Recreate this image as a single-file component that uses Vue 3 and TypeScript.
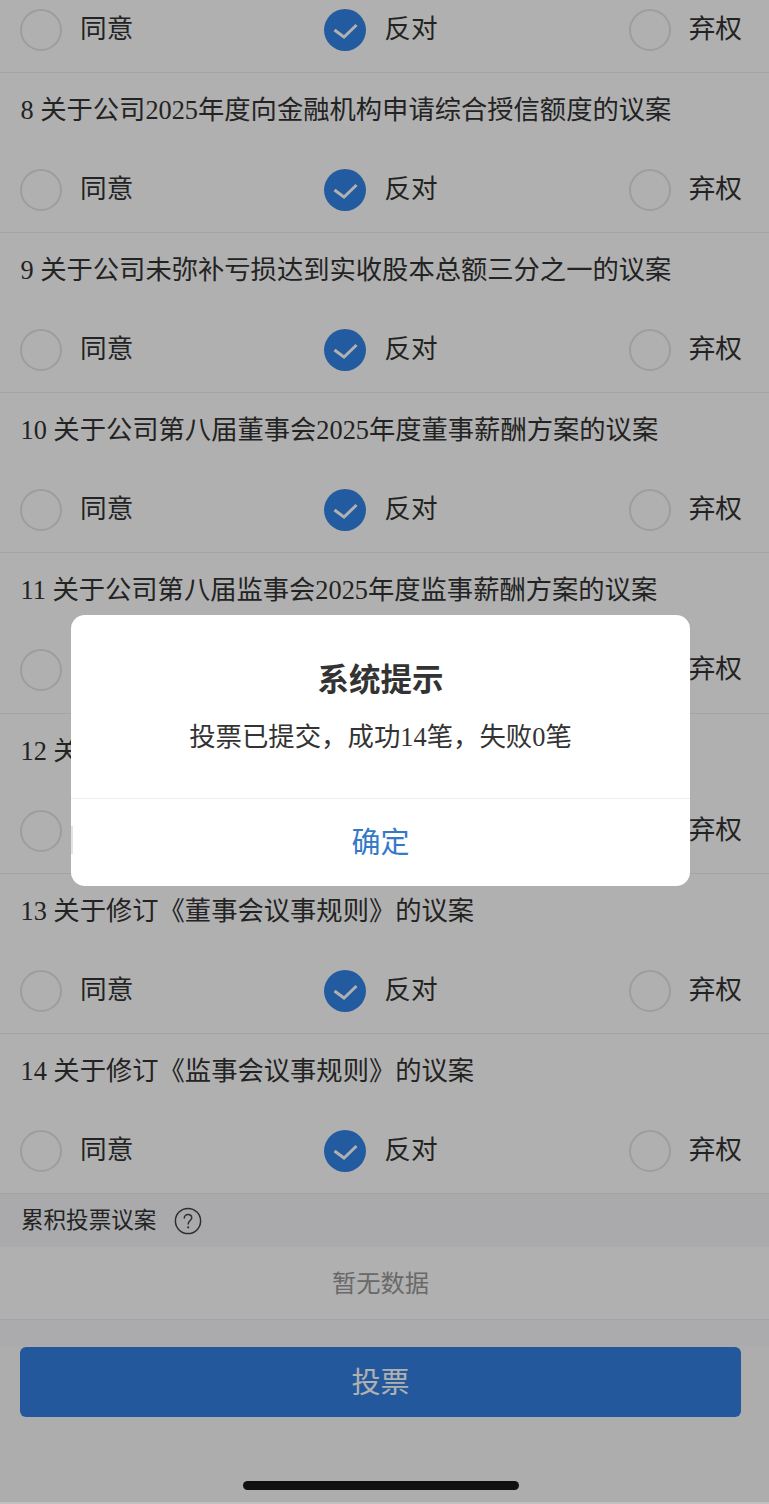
<script setup lang="ts">
const items: { no: number | null; title: string }[] = [
  { no: 7, title: '' },
  { no: 8, title: '关于公司2025年度向金融机构申请综合授信额度的议案' },
  { no: 9, title: '关于公司未弥补亏损达到实收股本总额三分之一的议案' },
  { no: 10, title: '关于公司第八届董事会2025年度董事薪酬方案的议案' },
  { no: 11, title: '关于公司第八届监事会2025年度监事薪酬方案的议案' },
  { no: 12, title: '关于修订《公司章程》的议案' },
  { no: 13, title: '关于修订《董事会议事规则》的议案' },
  { no: 14, title: '关于修订《监事会议事规则》的议案' },
]
</script>

<template>
  <div class="page">
    <section v-for="item in items" :key="item.no ?? 0" class="item" :class="{ cut: !item.title }">
      <div v-if="item.title" class="title">{{ item.no }} {{ item.title }}</div>
      <div class="options">
        <div class="option">
          <span class="radio"></span>
          <span class="label">同意</span>
        </div>
        <div class="option">
          <span class="radio on">
            <svg width="42" height="42" viewBox="0 0 42 42">
              <path d="M10.5 21 L20 28 L32.5 16" fill="none" stroke="#fff" stroke-width="3" stroke-linejoin="miter" />
            </svg>
          </span>
          <span class="label">反对</span>
        </div>
        <div class="option">
          <span class="radio"></span>
          <span class="label">弃权</span>
        </div>
      </div>
    </section>

    <div class="section-head">
      <span class="section-name">累积投票议案</span>
      <svg width="28" height="28" viewBox="0 0 28 28" class="help">
        <circle cx="14" cy="14" r="12.6" fill="none" stroke="#444" stroke-width="1.5" />
        <path d="M10.3 11 C10.3 8.8 12 7.6 14 7.6 C16.2 7.6 17.7 9 17.7 10.9 C17.7 13.4 14.2 13.8 14.2 16.9" fill="none" stroke="#444" stroke-width="1.5" stroke-linecap="round" />
        <circle cx="14.2" cy="20.3" r="1.1" fill="#444" />
      </svg>
    </div>
    <div class="empty">暂无数据</div>
    <div class="footer">
      <button class="vote" type="button">投票</button>
    </div>
    <div class="home-area"></div>

    <div class="mask"></div>
    <div class="home-bar"></div>
    <div class="edge"></div>
    <div class="dialog">
      <div class="dialog-body">
        <div class="dialog-title">系统提示</div>
        <div class="dialog-text">投票已提交，成功14笔，失败0笔</div>
      </div>
      <div class="dialog-action">确定</div>
      <span class="dialog-mark"></span>
    </div>
  </div>
</template>

<style>
html, body { margin: 0; background: #fff; overflow: hidden; }
</style>

<style scoped>
.page {
  position: relative;
  width: 769px;
  height: 1504px;
  overflow: hidden;
  background: #fff;
  color: #333;
  font-family: "Liberation Serif", "Noto Sans CJK SC", serif;
}
.item {
  box-sizing: border-box;
  height: 160.15px;
  border-bottom: 1px solid #eee;
}
.item.cut { height: 73px; }
.title {
  box-sizing: border-box;
  height: 69px;
  padding: 0 20.5px;
  display: flex;
  align-items: center;
  font-size: 26.3px;
  white-space: pre;
}
.options {
  display: flex;
  justify-content: space-between;
  padding: 27px 27px 0 20px;
}
.cut .options { padding-top: 9px; }
.option {
  display: flex;
  align-items: center;
  gap: 18px;
  height: 42px;
}
.radio {
  box-sizing: border-box;
  display: block;
  width: 42px;
  height: 42px;
  border-radius: 50%;
  border: 2px solid #e4e4e4;
  position: relative;
}
.radio.on {
  border: 0;
  background: #3484e8;
}
.radio svg { display: block; }
.label {
  font-size: 26.67px;
  line-height: 36px;
  margin-top: -2px;
}
.section-head {
  box-sizing: border-box;
  height: 53.5px;
  padding: 0 21px;
  display: flex;
  align-items: center;
  gap: 18px;
  background: #f6f6fa;
  font-size: 22.55px;
  color: #333;
}
.section-name { margin-top: -5px; }
.help { margin-top: 1px; }
.empty {
  box-sizing: border-box;
  height: 73px;
  display: flex;
  align-items: center;
  justify-content: center;
  padding: 0 8px 3px 0;
  border-bottom: 1px solid #eee;
  font-size: 24.3px;
  color: #999;
}
.footer {
  box-sizing: border-box;
  height: 96.5px;
  padding: 26.5px 28px 0 20px;
  background: linear-gradient(#f8f8fb 0 26.5px, #fbfbfb 26.5px);
}
.vote {
  display: block;
  width: 100%;
  height: 70px;
  border: 0;
  border-radius: 6px;
  background: #3480e4;
  color: #fff;
  font-family: inherit;
  font-size: 29px;
  padding: 0 0 3px;
}
.home-area {
  height: 90px;
  background: #fbfbfb;
}
.mask {
  position: absolute;
  inset: 0;
  background: rgba(0, 0, 0, 0.31);
}
.home-bar {
  position: absolute;
  left: 243px;
  top: 1481px;
  width: 276px;
  height: 9px;
  border-radius: 5px;
  background: #111;
}
.edge {
  position: absolute;
  left: 0;
  right: 0;
  bottom: 0;
  height: 2px;
  background: #c0c0c0;
}
.dialog {
  position: absolute;
  left: 71px;
  top: 615px;
  width: 619px;
  height: 271px;
  border-radius: 14px;
  background: #fff;
  display: flex;
  flex-direction: column;
}
.dialog-mark {
  position: absolute;
  left: 0;
  top: 211px;
  width: 2px;
  height: 28px;
  background: #e4e4e4;
}
.dialog-body {
  box-sizing: border-box;
  height: 184px;
  border-bottom: 1px solid #eee;
  text-align: center;
  padding-top: 44px;
}
.dialog-title {
  font-size: 31.5px;
  font-weight: 700;
  line-height: 44px;
  color: #333;
}
.dialog-text {
  margin-top: 14px;
  font-size: 26.4px;
  line-height: 40px;
  color: #333;
}
.dialog-action {
  flex: 1;
  display: flex;
  align-items: center;
  justify-content: center;
  padding-bottom: 5px;
  font-size: 29px;
  color: #3478c8;
}
</style>
